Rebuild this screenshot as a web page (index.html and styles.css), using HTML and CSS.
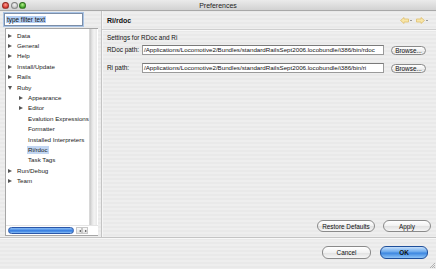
FILE: index.html
```html
<!DOCTYPE html>
<html>
<head>
<meta charset="utf-8">
<link rel="stylesheet" href="styles.css">
</head>
<body>
<div class="window">
  <div class="titlebar">
    <div class="lights">
      <span class="light red"></span>
      <span class="light grey"></span>
      <span class="light green"></span>
    </div>
    <div class="title">Preferences</div>
  </div>
  <div class="content">
    <div class="left">
      <div class="filter"><span class="sel">type filter text</span></div>
      <div class="treebox">
        <div class="tree">
          <div class="row"><span class="tw closed"></span><span class="lbl">Data</span></div>
          <div class="row"><span class="tw closed"></span><span class="lbl">General</span></div>
          <div class="row"><span class="tw closed"></span><span class="lbl">Help</span></div>
          <div class="row"><span class="tw closed"></span><span class="lbl">Install/Update</span></div>
          <div class="row"><span class="tw closed"></span><span class="lbl">Rails</span></div>
          <div class="row"><span class="tw open"></span><span class="lbl">Ruby</span></div>
          <div class="row sub"><span class="tw closed"></span><span class="lbl">Appearance</span></div>
          <div class="row sub"><span class="tw closed"></span><span class="lbl">Editor</span></div>
          <div class="row sub"><span class="tw"></span><span class="lbl">Evalution Expressions</span></div>
          <div class="row sub"><span class="tw"></span><span class="lbl">Formatter</span></div>
          <div class="row sub"><span class="tw"></span><span class="lbl">Installed Interpreters</span></div>
          <div class="row sub"><span class="tw"></span><span class="lbl selected">Ri/rdoc</span></div>
          <div class="row sub"><span class="tw"></span><span class="lbl">Task Tags</span></div>
          <div class="row"><span class="tw closed"></span><span class="lbl">Run/Debug</span></div>
          <div class="row"><span class="tw closed"></span><span class="lbl">Team</span></div>
        </div>
        <div class="vscroll"></div>
        <div class="hscroll">
          <div class="thumb"></div>
          <div class="arrows"><span class="arr l"></span><span class="arr r"></span></div>
        </div>
        <div class="corner"></div>
      </div>
    </div>
    <div class="sash"></div>
    <div class="right">
      <div class="header">
        <div class="htitle">Ri/rdoc</div>
        <div class="nav">
          <svg width="9" height="7" viewBox="0 0 9 7"><path d="M0.5 3.5 L4 0.5 V2 H8.5 V5 H4 V6.5 Z" fill="#f8e6a8" stroke="#e0c070" stroke-width="0.8"/></svg>
          <span class="dd"></span>
          <svg width="9" height="7" viewBox="0 0 9 7"><path d="M8.5 3.5 L5 0.5 V2 H0.5 V5 H5 V6.5 Z" fill="#f8e6a8" stroke="#e0c070" stroke-width="0.8"/></svg>
          <span class="dd"></span>
        </div>
      </div>
      <div class="body">
        <div class="desc">Settings for RDoc and Ri</div>
        <div class="form">
          <div class="flabel">RDoc path:</div>
          <div class="field">/Applications/Locomotive2/Bundles/standardRailsSept2006.locobundle/i386/bin/rdoc</div>
          <div class="btn small">Browse...</div>
          <div class="flabel">Ri path:</div>
          <div class="field">/Applications/Locomotive2/Bundles/standardRailsSept2006.locobundle/i386/bin/ri</div>
          <div class="btn small">Browse...</div>
        </div>
      </div>
      <div class="actions">
        <div class="btn restore">Restore Defaults</div>
        <div class="btn apply">Apply</div>
      </div>
    </div>
  </div>
  <div class="footer">
    <div class="btn cancel">Cancel</div>
    <div class="btn ok">OK</div>
    <div class="grip">
      <svg width="6" height="6" viewBox="0 0 6 6"><path d="M1 6 L6 1 M3 6 L6 3 M5 6 L6 5" stroke="#999" stroke-width="0.7"/></svg>
    </div>
  </div>
</div>
</body>
</html>
```
FILE: styles.css
```css
* { box-sizing: border-box; }
html, body { margin: 0; padding: 0; }
body {
  width: 436px;
  height: 269px;
  overflow: hidden;
  background: #ececec;
  font-family: "Liberation Sans", Arial, sans-serif;
  font-size: 6.4px;
  color: #111;
}
.window {
  width: 436px;
  height: 269px;
  display: flex;
  flex-direction: column;
  background: repeating-linear-gradient(to bottom, #eeeeee 0, #eeeeee 2px, #e9e9e9 2px, #e9e9e9 4px);
}
.titlebar {
  height: 11px;
  flex: none;
  position: relative;
  display: flex;
  align-items: center;
  justify-content: center;
  background: linear-gradient(to bottom, #ebebeb, #d2d2d2);
  border-bottom: 1px solid #a8a8a8;
}
.lights {
  position: absolute;
  left: 2px;
  top: 1.5px;
  display: flex;
  gap: 1.5px;
}
.light {
  width: 7px;
  height: 7px;
  border-radius: 50%;
  border: 0.5px solid rgba(0,0,0,0.35);
}
.light.red { background: radial-gradient(circle at 50% 35%, #ff9c92, #d8392f 70%); }
.light.grey { background: radial-gradient(circle at 50% 35%, #f4f4f4, #c4c4c4 70%); }
.light.green { background: radial-gradient(circle at 50% 35%, #b6f08a, #3fa428 70%); }
.title {
  font-size: 7px;
  color: #222;
}
.content {
  flex: none;
  height: 227px;
  display: flex;
  border-bottom: 1px solid #c4c4c4;
  box-shadow: 0 1px 0 #f8f8f8;
}
.left {
  width: 100px;
  flex: none;
  display: flex;
  flex-direction: column;
  padding: 2px 0 0 4px;
}
.filter {
  width: 79px;
  height: 13px;
  background: #fff;
  border: 1px solid #7c8ea8;
  box-shadow: 0 0 0 1px #a9c4e6;
  padding: 1px 0 0 1px;
  line-height: 9px;
}
.sel {
  background: #b3cff5;
  padding: 0 1px;
}
.treebox {
  margin-top: 2px;
  width: 93px;
  height: 208px;
  margin-left: 1px;
  border: 1px solid #a6a6a6;
  border-right: none;
  background: #fff;
  display: grid;
  grid-template-columns: 1fr 9px;
  grid-template-rows: 1fr 10px;
}
.tree {
  padding-top: 1.5px;
  overflow: hidden;
  font-size: 6.2px;
}
.row {
  height: 10.4px;
  display: flex;
  align-items: center;
  white-space: nowrap;
  padding-left: 1px;
}
.row.sub { padding-left: 12px; }
.tw {
  width: 9px;
  flex: none;
  height: 6px;
  position: relative;
}
.tw.closed::before {
  content: "";
  position: absolute;
  left: 1px;
  top: 1px;
  border-left: 4px solid #555;
  border-top: 2.5px solid transparent;
  border-bottom: 2.5px solid transparent;
}
.tw.open::before {
  content: "";
  position: absolute;
  left: 0.5px;
  top: 1.5px;
  border-top: 4px solid #555;
  border-left: 2.5px solid transparent;
  border-right: 2.5px solid transparent;
}
.lbl { color: #1a1a1a; line-height: 8px; padding: 0 1px; }
.lbl.selected { background: #c2d6f2; }
.vscroll {
  background: linear-gradient(to right, #c9c9c9, #e4e4e4 30%, #f3f3f3 60%, #e8e8e8);
  border-left: 1px solid #d8d8d8;
  border-right: 1px solid #fff;
}
.hscroll {
  display: flex;
  align-items: center;
  padding-left: 2px;
  border-top: 1px solid #e4e4e4;
}
.thumb {
  width: 66px;
  height: 7px;
  border-radius: 4px;
  border: 1px solid #2a56a8;
  background: linear-gradient(to bottom, #8bbcf2, #4a8ee8 45%, #2f77de 55%, #89c0f6);
}
.arrows {
  display: flex;
  margin-left: 2px;
}
.arr {
  width: 6px;
  height: 7px;
  position: relative;
  background: linear-gradient(to bottom, #fafafa, #e2e2e2);
  border: 0.5px solid #c8c8c8;
}
.arr.l::before {
  content: "";
  position: absolute;
  left: 1.5px;
  top: 1.5px;
  border-right: 2.5px solid #444;
  border-top: 1.7px solid transparent;
  border-bottom: 1.7px solid transparent;
}
.arr.r::before {
  content: "";
  position: absolute;
  left: 2px;
  top: 1.5px;
  border-left: 2.5px solid #444;
  border-top: 1.7px solid transparent;
  border-bottom: 1.7px solid transparent;
}
.corner { background: #fff; border-top: 1px solid #e4e4e4; }
.sash {
  width: 1px;
  flex: none;
}
.right {
  flex: 1;
  display: flex;
  flex-direction: column;
  border-left: 1px solid #c4c4c4;
  box-shadow: inset 1px 0 0 #f6f6f6;
}
.header {
  height: 19px;
  flex: none;
  display: flex;
  align-items: center;
  justify-content: space-between;
  padding: 0 5px 0 5px;
  border-bottom: 1px solid #cfcfcf;
  box-shadow: 0 1px 0 #f7f7f7;
}
.htitle {
  font-weight: bold;
  font-size: 7px;
}
.nav {
  display: flex;
  align-items: center;
  gap: 1px;
  padding-top: 1px;
}
.dd {
  width: 2px;
  height: 1.5px;
  background: #999;
  margin-right: 3px;
}
.body {
  padding: 4px 6px 0 5px;
}
.desc {
  line-height: 8px;
  height: 8px;
}
.form {
  margin-top: 3px;
  display: grid;
  grid-template-columns: 35px 242px 1fr;
  row-gap: 8px;
  align-items: center;
}
.flabel { line-height: 10px; }
.field {
  height: 10px;
  background: #fff;
  border: 1px solid #9a9a9a;
  border-top-color: #7a7a7a;
  line-height: 8px;
  padding-left: 1px;
  white-space: nowrap;
  overflow: hidden;
  font-size: 6.2px;
}
.btn {
  display: flex;
  align-items: center;
  justify-content: center;
  height: 12px;
  border-radius: 6px;
  border: 1px solid #8a8a8a;
  background: linear-gradient(to bottom, #ffffff, #f1f1f1 50%, #e2e2e2 55%, #f6f6f6);
  font-size: 6.4px;
  color: #111;
  white-space: nowrap;
}
.btn.small {
  height: 9px;
  width: 35px;
  margin-left: 7px;
  border-radius: 5px;
}
.actions {
  margin-top: auto;
  display: flex;
  justify-content: flex-end;
  gap: 8px;
  padding: 0 5px 5px 0;
}
.btn.restore { width: 58px; }
.btn.apply { width: 48px; }
.footer {
  flex: 1;
  display: flex;
  justify-content: flex-end;
  align-items: flex-start;
  padding: 8px 8px 0 0;
  gap: 9px;
  position: relative;
}
.btn.cancel { width: 49px; height: 13px; }
.btn.ok {
  width: 48px;
  height: 13px;
  border-color: #1f4f9a;
  background: linear-gradient(to bottom, #c6e0fb, #6aa8ec 45%, #3c86e0 55%, #8ec4f8);
  font-weight: bold;
}
.grip {
  position: absolute;
  right: 1px;
  bottom: 1px;
  width: 6px;
  height: 6px;
  display: flex;
}
```
